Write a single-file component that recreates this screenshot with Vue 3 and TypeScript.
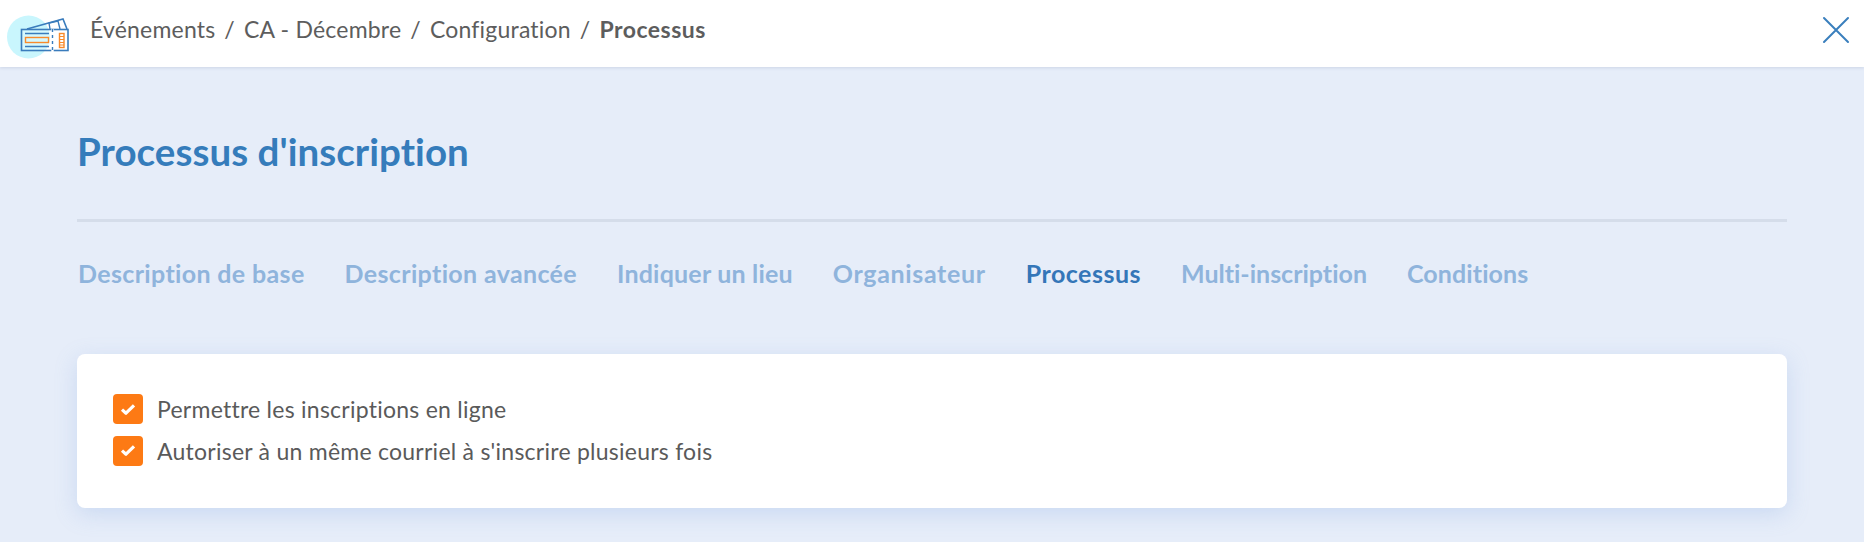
<script setup lang="ts">
const crumbs: string[] = ['Événements', 'CA - Décembre', 'Configuration']
const tabs: { label: string; active?: boolean }[] = [
  { label: 'Description de base' },
  { label: 'Description avancée' },
  { label: 'Indiquer un lieu' },
  { label: 'Organisateur' },
  { label: 'Processus', active: true },
  { label: 'Multi-inscription' },
  { label: 'Conditions' },
]
const options: string[] = [
  'Permettre les inscriptions en ligne',
  "Autoriser à un même courriel à s'inscrire plusieurs fois",
]
</script>

<template>
  <div class="page">
    <header class="topbar">
      <svg class="logo" width="70" height="56" viewBox="0 0 70 56" fill="none">
        <circle cx="28.5" cy="31" r="21.5" fill="#c9f6fd" />
        <path d="M27 23 L63 13 L67 23" stroke="#3a7cbc" stroke-width="1.6" />
        <path d="M50 23 L49 17 L58 15 L60 23" stroke="#3a7cbc" stroke-width="1.4" />
        <rect x="21.5" y="23.5" width="46.5" height="21" fill="#fff" fill-opacity="0.25" stroke="#3a7cbc" stroke-width="1.6" />
        <path d="M52.5 23 V46" stroke="#fff" stroke-width="2.4" />
        <path d="M52.5 23 V46" stroke="#3a7cbc" stroke-width="1.4" stroke-dasharray="3 3" />
        <path d="M25 27.5 H49 M25 40.5 H49" stroke="#3a7cbc" stroke-width="1.4" />
        <rect x="25.5" y="31.5" width="23" height="5" stroke="#f98a2b" stroke-width="1.4" />
        <rect x="59.5" y="27.5" width="4.5" height="14" stroke="#f98a2b" stroke-width="1.4" />
        <path d="M59.5 30.5 H64 M59.5 33.5 H64 M59.5 36.5 H64 M59.5 39 H64" stroke="#f98a2b" stroke-width="1" />
      </svg>
      <nav class="crumbs">
        <template v-for="c in crumbs" :key="c">
          <span>{{ c }}</span><span class="sep">/</span>
        </template>
        <b>Processus</b>
      </nav>
      <svg class="close" width="28" height="28" viewBox="0 0 28 28" fill="none">
        <path d="M2 2 L26 26 M26 2 L2 26" stroke="#3a7fbd" stroke-width="2" stroke-linecap="round" />
      </svg>
    </header>
    <main class="content">
      <h1 class="title">Processus d'inscription</h1>
      <div class="rule"></div>
      <div class="tabs">
        <a v-for="t in tabs" :key="t.label" class="tab" :class="{ active: t.active }">{{ t.label }}</a>
      </div>
      <section class="card">
        <label v-for="o in options" :key="o" class="opt">
          <span class="box">
            <svg width="16" height="13" viewBox="0 0 16 13" fill="none">
              <path d="M2 6.6 L6 10.2 L14 2.4" stroke="#fff" stroke-width="3.2" stroke-linejoin="round" />
            </svg>
          </span>
          <span>{{ o }}</span>
        </label>
      </section>
    </main>
  </div>
</template>

<style>
html, body { margin: 0; background: #e6edf9; }
</style>

<style scoped>
.page {
  width: 1864px;
  height: 542px;
  overflow: hidden;
  background: #e6edf9;
  font-family: "Lato", "Noto Sans", sans-serif;
  font-variant-ligatures: none;
  color: #555;
}
.topbar {
  height: 67px;
  background: #fff;
  box-shadow: 0 1px 3px rgba(60, 80, 130, 0.15);
  display: flex;
  align-items: center;
  position: relative;
}
.logo { flex: none; margin-right: 20px; }
.crumbs { font-size: 23px; letter-spacing: 0.2px; display: flex; gap: 9px; color: #5d5d5d; flex: 1; margin-top: -9px; }
.crumbs b { font-weight: 700; letter-spacing: 0.5px; }
.close { flex: none; margin: -8px 14px 0 0; }
.content { padding: 0 77px; }
.title {
  margin: 0;
  padding-top: 62px;
  font-size: 38.5px;
  letter-spacing: 0.05px;
  line-height: 44px;
  font-weight: 700;
  color: #357cbb;
}
.rule { height: 3px; background: #d5ddea; margin-top: 46px; }
.tabs { display: flex; gap: 40px; margin-top: 36px; padding-left: 1px; }
.tab { font-size: 25px; letter-spacing: 0.35px; line-height: 30px; font-weight: 700; color: #8fb4dc; }
.tab:nth-child(3) { letter-spacing: 0.2px; }
.tab:nth-child(4) { letter-spacing: 0.65px; }
.tab:nth-child(5) { letter-spacing: 0.5px; }
.tab:nth-child(6) { letter-spacing: 0; }
.tab:nth-child(7) { letter-spacing: 0.1px; }
.tab.active { color: #3476b8; }
.card {
  margin-top: 66px;
  height: 154px;
  box-sizing: border-box;
  background: #fff;
  border-radius: 8px;
  box-shadow: 0 6px 22px rgba(120, 160, 225, 0.25);
  padding: 40px 36px;
  display: flex;
  flex-direction: column;
  gap: 11.5px;
}
.opt { display: flex; align-items: center; gap: 14px; font-size: 23px; letter-spacing: 0.25px; line-height: 30px; color: #5a5a5a; }
.box {
  width: 30px;
  height: 30px;
  flex: none;
  border-radius: 4px;
  background: #fd7a14;
  display: flex;
  align-items: center;
  justify-content: center;
}
</style>
